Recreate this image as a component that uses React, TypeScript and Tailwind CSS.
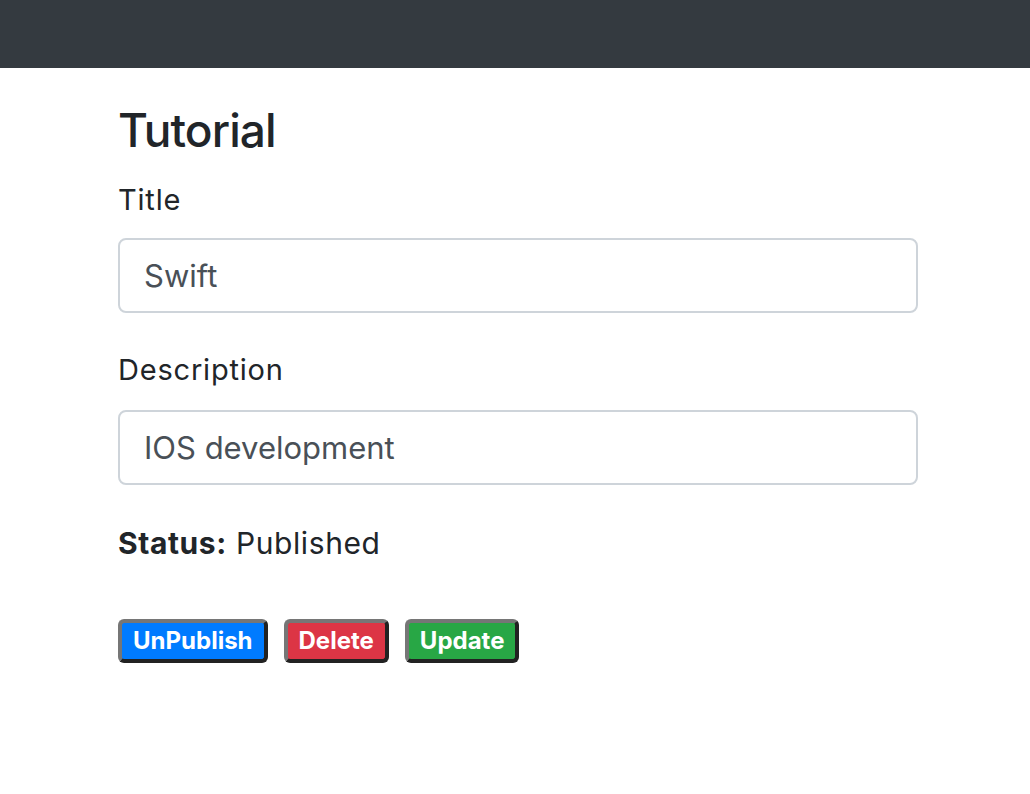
export default function App() {
  return (
    <div className="min-h-screen bg-white font-['Inter','Liberation_Sans',sans-serif] text-[#212529]">
      <nav className="h-[68px] bg-[#343a40]" />

      <main className="ml-[118px] w-[800px] pt-[35px]">
        <h4 className="text-[46px] font-medium leading-[1.2] tracking-[-0.9px] mb-[21px]">Tutorial</h4>

        <form>
          <div className="mb-[36px]">
            <label className="block text-[29px] leading-[42px] tracking-[0.8px] mb-[17px]">Title</label>
            <input
              className="block w-full h-[75px] px-[24px] text-[31px] text-[#495057] border-2 border-[#ced4da] rounded-[8px] outline-none"
              defaultValue="Swift"
            />
          </div>
          <div className="mb-[36px]">
            <label className="block text-[29px] leading-[42px] tracking-[0.8px] mb-[19px]">Description</label>
            <input
              className="block w-full h-[75px] px-[24px] text-[31px] text-[#495057] border-2 border-[#ced4da] rounded-[8px] outline-none"
              defaultValue="IOS development"
            />
          </div>
          <div className="text-[30px] leading-[45px] tracking-[0.6px]">
            <span className="font-bold">Status:</span> Published
          </div>
        </form>

        <div className="flex gap-[16px] mt-[53px]">
          <button className="h-[44px] px-[11px] bg-[#007bff] text-white text-[24px] font-bold rounded-[6px] border-4 border-t-[#767676] border-l-[#767676] border-b-[#222] border-r-[#222]">
            UnPublish
          </button>
          <button className="h-[44px] px-[11px] bg-[#dc3545] text-white text-[24px] font-bold rounded-[6px] border-4 border-t-[#767676] border-l-[#767676] border-b-[#222] border-r-[#222]">
            Delete
          </button>
          <button className="h-[44px] px-[11px] bg-[#28a745] text-white text-[24px] font-bold rounded-[6px] border-4 border-t-[#767676] border-l-[#767676] border-b-[#222] border-r-[#222]">
            Update
          </button>
        </div>
      </main>
    </div>
  );
}
